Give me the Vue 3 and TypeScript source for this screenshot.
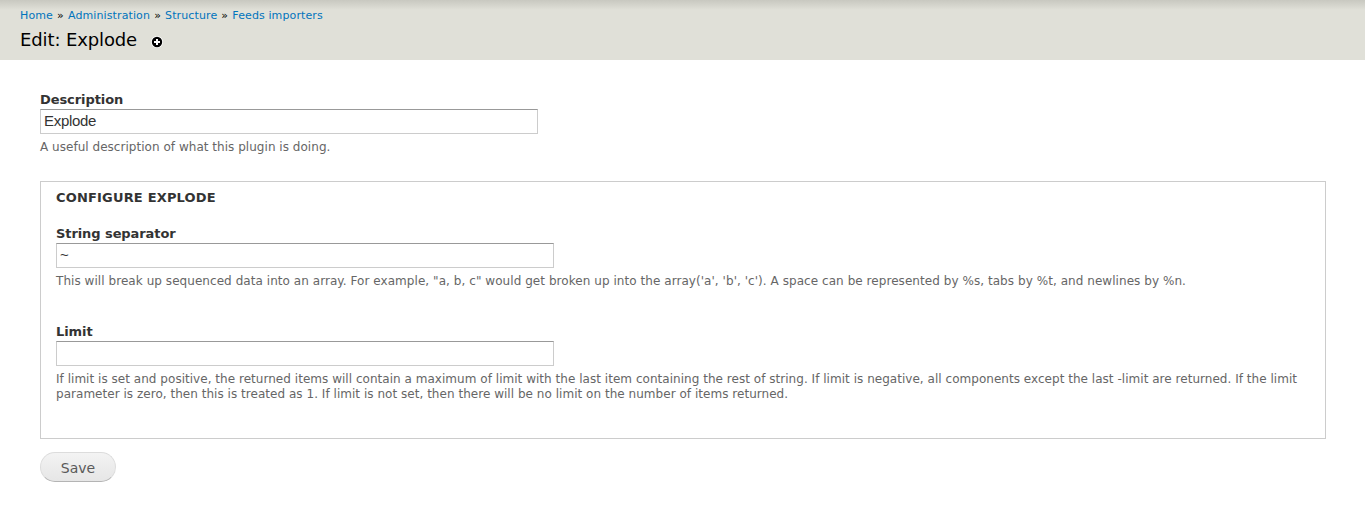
<script setup lang="ts">
import { ref } from 'vue'

const crumbs: string[] = ['Home', 'Administration', 'Structure', 'Feeds importers']
const description = ref('Explode')
const separator = ref('~')
const limit = ref('')
</script>

<template>
  <div class="page">
    <header class="branding">
      <nav class="breadcrumb">
        <template v-for="(crumb, i) in crumbs" :key="crumb">
          <span v-if="i > 0"> » </span><a href="#">{{ crumb }}</a>
        </template>
      </nav>
      <div class="title-row">
        <h1>Edit: Explode</h1>
        <svg class="add" width="12" height="12" viewBox="0 0 12 12">
          <circle cx="6" cy="6" r="6" fill="#fff" />
          <circle cx="6" cy="6" r="5.2" fill="#000" />
          <path d="M6 3v6M3 6h6" stroke="#fff" stroke-width="2" />
        </svg>
      </div>
    </header>
    <form class="content" @submit.prevent>
      <div class="item">
        <label for="description">Description</label>
        <input id="description" v-model="description" type="text" />
        <p>A useful description of what this plugin is doing.</p>
      </div>
      <section class="fieldset">
        <h2>CONFIGURE EXPLODE</h2>
        <div class="item separator">
          <label for="separator">String separator</label>
          <input id="separator" v-model="separator" type="text" />
          <p>This will break up sequenced data into an array. For example, "a, b, c" would get broken up into the array('a', 'b', 'c'). A space can be represented by %s, tabs by %t, and newlines by %n.</p>
        </div>
        <div class="item limit">
          <label for="limit">Limit</label>
          <input id="limit" v-model="limit" type="text" />
          <p>If limit is set and positive, the returned items will contain a maximum of limit with the last item containing the rest of string. If limit is negative, all components except the last -limit are returned. If the limit parameter is zero, then this is treated as 1. If limit is not set, then there will be no limit on the number of items returned.</p>
        </div>
      </section>
      <button type="submit">Save</button>
    </form>
  </div>
</template>

<style>
body {
  background: #fff;
}
</style>

<style scoped>
.page {
  height: 528px;
  overflow: hidden;
  font-family: "DejaVu Sans", sans-serif;
  color: #333;
}
.branding {
  box-sizing: border-box;
  height: 60px;
  padding: 8px 20px 0;
  background: #e0e0d8 linear-gradient(#c8c8c0, #e0e0d8 10px);
  color: #000;
}
.breadcrumb {
  height: 15px;
  font-size: 11px;
  line-height: 15px;
  letter-spacing: 0.11px;
}
.breadcrumb span {
  word-spacing: 0.5px;
}
.breadcrumb a {
  color: #0074bd;
  text-decoration: none;
}
.title-row {
  display: flex;
  align-items: center;
  height: 34px;
}
h1 {
  margin: 0;
  font-size: 18px;
  font-weight: normal;
  line-height: 24px;
  letter-spacing: -0.12px;
}
.add {
  margin: 4px 0 0 14px;
}
.content {
  padding: 32px 39px 0 40px;
}
label {
  display: block;
  height: 17px;
  font-size: 13px;
  font-weight: bold;
  line-height: 16px;
  letter-spacing: -0.08px;
}
input {
  box-sizing: border-box;
  display: block;
  width: 498px;
  height: 25px;
  margin: 0;
  padding: 1px 3px 3px;
  border: 1px solid #ccc;
  border-top-color: #999;
  border-radius: 0;
  outline: none;
  background: #fff;
  color: #333;
  font: 15px "Liberation Sans", Arial, sans-serif;
  letter-spacing: -0.3px;
}
p {
  margin: 6px 0 0;
  color: #666;
  font-size: 12px;
  line-height: 15px;
  letter-spacing: 0.031px;
}
.fieldset {
  box-sizing: border-box;
  height: 258px;
  margin-top: 26px;
  padding: 8px 15px 0;
  border: 1px solid #ccc;
}
h2 {
  margin: 0;
  font-size: 13px;
  line-height: 16px;
  letter-spacing: 0.18px;
}
.separator {
  margin-top: 20px;
}
.separator p {
  letter-spacing: 0.055px;
}
.limit {
  margin-top: 35px;
}
button {
  display: block;
  width: 76px;
  height: 30px;
  margin: 13px 0 0;
  padding: 2px 0 0;
  border: 1px solid #dcdcdc;
  border-bottom-color: #b4b4b4;
  border-radius: 15px;
  background: linear-gradient(#f3f3f3, #e6e6e6);
  color: #5a5a5a;
  font: 14px "DejaVu Sans", sans-serif;
}
</style>
